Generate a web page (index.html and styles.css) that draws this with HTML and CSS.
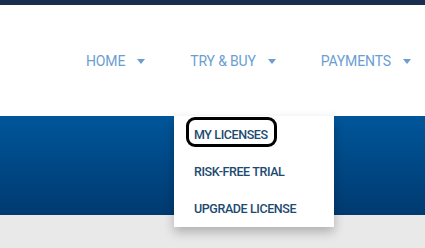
FILE: index.html
```html
<!DOCTYPE html>
<html>
<head>
<meta charset="utf-8">
<link rel="stylesheet" href="styles.css">
</head>
<body>
<div class="topbar"></div>
<header class="header">
  <nav class="nav">
    <div class="nav-item"><span class="nav-label">HOME</span><span class="caret"></span></div>
    <div class="nav-item"><span class="nav-label">TRY &amp; BUY</span><span class="caret"></span></div>
    <div class="nav-item"><span class="nav-label">PAYMENTS</span><span class="caret"></span></div>
  </nav>
</header>
<section class="hero"></section>
<section class="below"></section>
<ul class="dropdown">
  <li class="dd-item highlighted"><span class="dd-label">MY LICENSES</span></li>
  <li class="dd-item"><span class="dd-label">RISK-FREE TRIAL</span></li>
  <li class="dd-item"><span class="dd-label">UPGRADE LICENSE</span></li>
</ul>
</body>
</html>
```
FILE: styles.css
```css
html, body {
  margin: 0;
  padding: 0;
}
body {
  width: 425px;
  height: 248px;
  overflow: hidden;
  position: relative;
  background: #e9e9e9;
  font-family: Roboto, "Liberation Sans", sans-serif;
}
.topbar {
  height: 5px;
  background: #1a2e50;
}
.header {
  height: 111px;
  background: #fff;
  display: flex;
  align-items: center;
}
.nav {
  display: flex;
  gap: 45px;
  padding-left: 86px;
  margin-top: 1px;
}
.nav-item {
  display: flex;
  align-items: center;
}
.nav-label {
  color: #6a9ed3;
  font-size: 14px;
  font-weight: 400;
  letter-spacing: -0.15px;
}
.caret {
  width: 0;
  height: 0;
  margin-left: 12px;
  border-left: 4.5px solid transparent;
  border-right: 4.5px solid transparent;
  border-top: 5px solid #6a9ed3;
}
.hero {
  height: 99px;
  background: linear-gradient(#00569a, #003a70);
}
.below {
  height: 33px;
  background: #e9e9e9;
}
.dropdown {
  position: absolute;
  left: 174px;
  top: 116px;
  width: 160px;
  margin: 0;
  padding: 0;
  list-style: none;
  background: #fff;
  box-shadow: 0 5px 10px rgba(0,0,0,0.25);
}
.dd-item {
  height: 37px;
  display: flex;
  align-items: center;
  padding-left: 20px;
  position: relative;
}
.dd-label {
  color: #1c4a70;
  font-size: 12.5px;
  font-weight: 500;
  letter-spacing: -0.4px;
}
.highlighted::after {
  content: "";
  position: absolute;
  left: 12px;
  top: 1px;
  width: 91px;
  height: 30px;
  box-sizing: border-box;
  border: 3px solid #000;
  border-radius: 9px;
}
```
